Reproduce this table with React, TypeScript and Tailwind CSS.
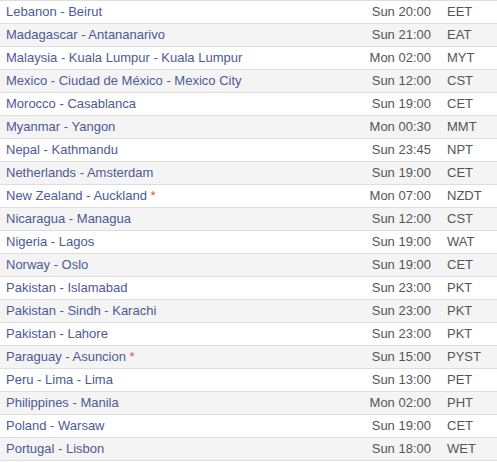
const rows: { place: string; time: string; tz: string; dst?: boolean }[] = [
  { place: "Lebanon - Beirut", time: "Sun 20:00", tz: "EET" },
  { place: "Madagascar - Antananarivo", time: "Sun 21:00", tz: "EAT" },
  { place: "Malaysia - Kuala Lumpur - Kuala Lumpur", time: "Mon 02:00", tz: "MYT" },
  { place: "Mexico - Ciudad de México - Mexico City", time: "Sun 12:00", tz: "CST" },
  { place: "Morocco - Casablanca", time: "Sun 19:00", tz: "CET" },
  { place: "Myanmar - Yangon", time: "Mon 00:30", tz: "MMT" },
  { place: "Nepal - Kathmandu", time: "Sun 23:45", tz: "NPT" },
  { place: "Netherlands - Amsterdam", time: "Sun 19:00", tz: "CET" },
  { place: "New Zealand - Auckland", time: "Mon 07:00", tz: "NZDT", dst: true },
  { place: "Nicaragua - Managua", time: "Sun 12:00", tz: "CST" },
  { place: "Nigeria - Lagos", time: "Sun 19:00", tz: "WAT" },
  { place: "Norway - Oslo", time: "Sun 19:00", tz: "CET" },
  { place: "Pakistan - Islamabad", time: "Sun 23:00", tz: "PKT" },
  { place: "Pakistan - Sindh - Karachi", time: "Sun 23:00", tz: "PKT" },
  { place: "Pakistan - Lahore", time: "Sun 23:00", tz: "PKT" },
  { place: "Paraguay - Asuncion", time: "Sun 15:00", tz: "PYST", dst: true },
  { place: "Peru - Lima - Lima", time: "Sun 13:00", tz: "PET" },
  { place: "Philippines - Manila", time: "Mon 02:00", tz: "PHT" },
  { place: "Poland - Warsaw", time: "Sun 19:00", tz: "CET" },
  { place: "Portugal - Lisbon", time: "Sun 18:00", tz: "WET" },
];

export default function App() {
  return (
    <div className="w-[497px] h-[462px] bg-white font-['Liberation_Sans',Arial,sans-serif] text-[13px] overflow-hidden">
      <div className="border-b border-[#dddddd]">
        {rows.map((r, i) => (
          <div
            key={r.place}
            className={`flex items-center h-[23px] border-t border-[#dddddd] ${
              i % 2 === 1 ? "bg-[#f4f4f4]" : "bg-white"
            }`}
          >
            <div className="flex-1 pl-[6px] text-[#4d5a94] whitespace-nowrap">
              {r.place}
              {r.dst && <span className="text-[#d9534f]"> *</span>}
            </div>
            <div className="w-[100px] text-right text-[#555555]">{r.time}</div>
            <div className="w-[66px] pl-[16px] text-[#555555]">{r.tz}</div>
          </div>
        ))}
      </div>
    </div>
  );
}
